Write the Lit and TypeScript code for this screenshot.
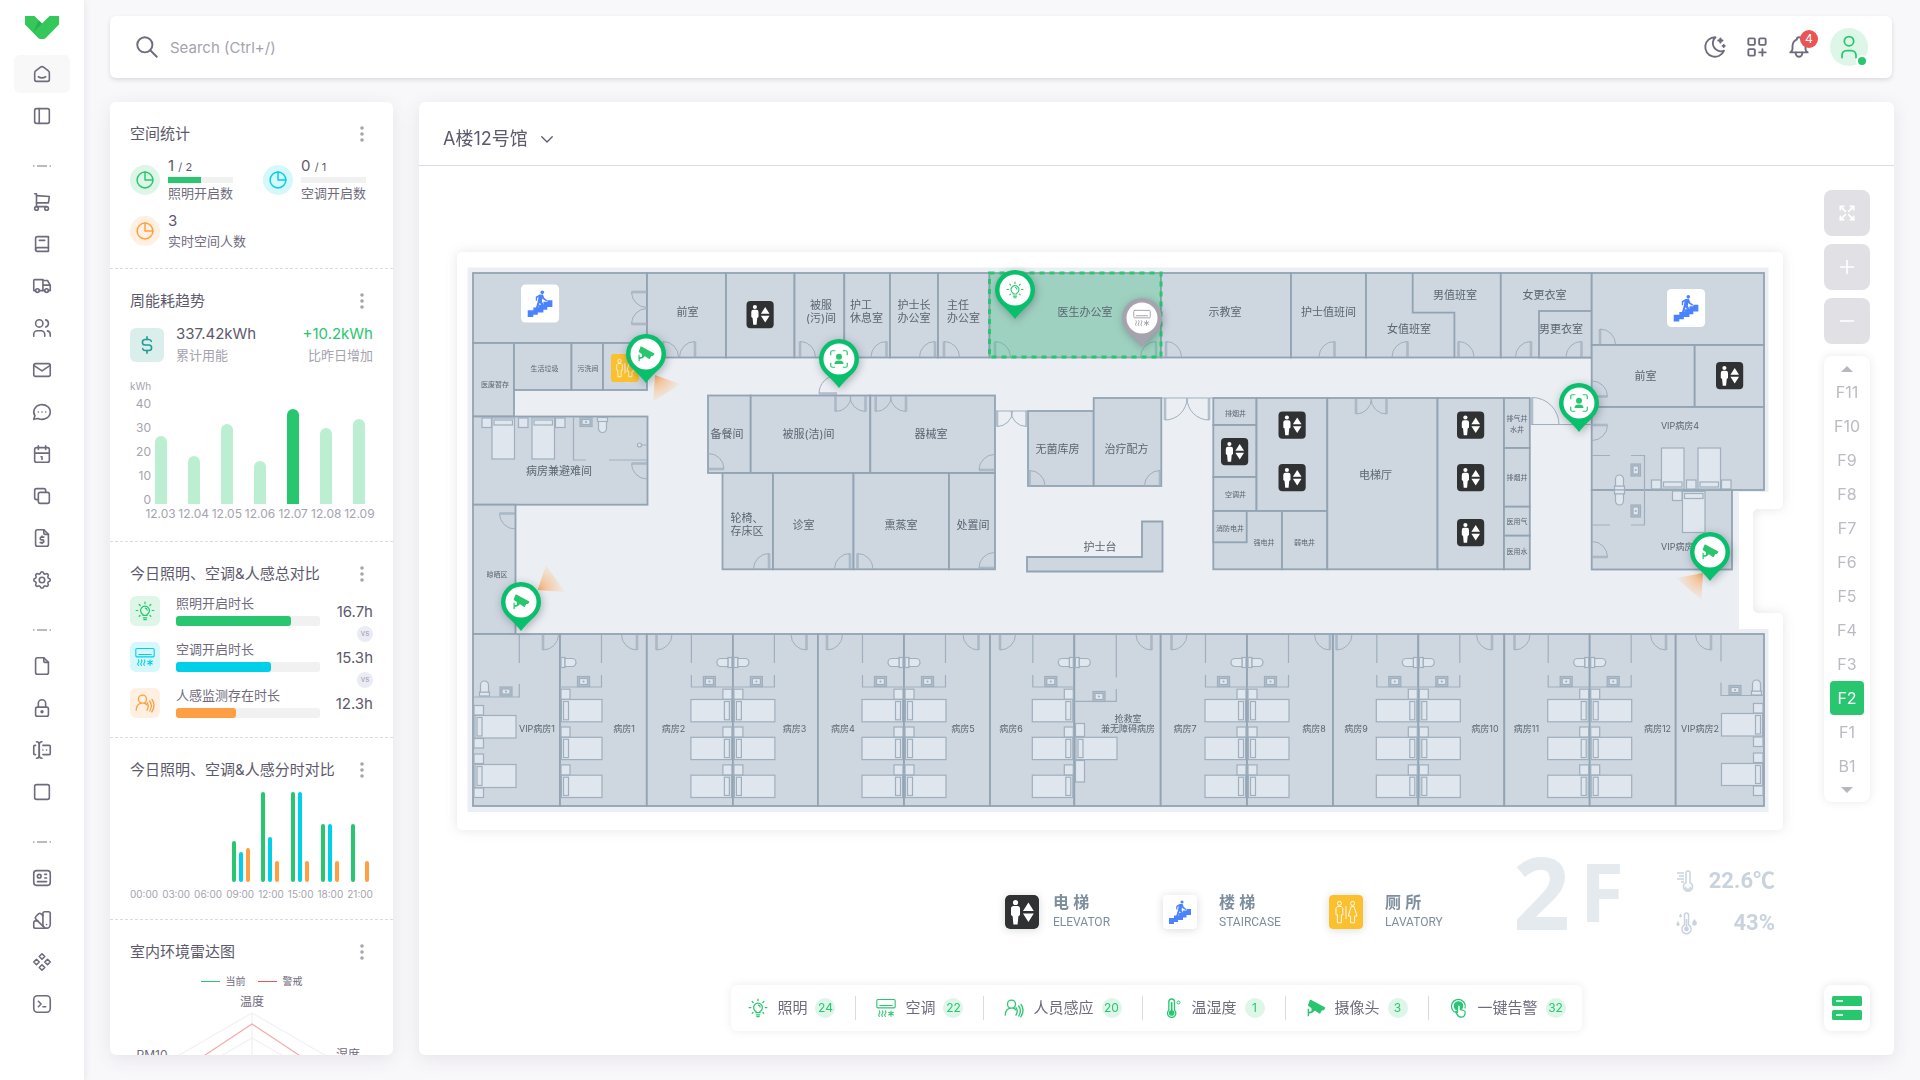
import { LitElement, html, css, svg, nothing } from "lit";
import { customElement, state } from "lit/decorators.js";
import { classMap } from "lit/directives/class-map.js";
import { styleMap } from "lit/directives/style-map.js";

const base = css`
  * { box-sizing: border-box; }
  :host {
    --text: #5d596c;
    --body: #6f6b7d;
    --muted: #a5a3ae;
    --green: #28c76f;
    --cyan: #00cfe8;
    --orange: #ff9f43;
    --track: #f1f1f2;
    font-family: Inter, "Noto Sans CJK SC", sans-serif;
    color: var(--text);
  }
  button, input, select {
    font: inherit;
    color: inherit;
    border: 0;
    padding: 0;
    margin: 0;
    background: none;
  }
  button { cursor: pointer; }
  svg { display: block; flex: none; }
`;

/* ---------- line icons, 24 unit grid ---------- */
const LINE: Record<string, string[]> = {
  home: ["M19 8.71l-5.333-4.148a2.666 2.666 0 0 0-3.274 0L5.059 8.71a2.665 2.665 0 0 0-1.029 2.105v7.2a2 2 0 0 0 2 2h12a2 2 0 0 0 2-2v-7.2c0-.823-.38-1.6-1.03-2.105", "M16 15c-2.21 1.333-5.792 1.333-8 0"],
  sidebar: ["M4 6a2 2 0 0 1 2-2h12a2 2 0 0 1 2 2v12a2 2 0 0 1-2 2H6a2 2 0 0 1-2-2z", "M9 4v16"],
  cart: ["M4 19a2 2 0 1 0 4 0a2 2 0 1 0-4 0", "M15 19a2 2 0 1 0 4 0a2 2 0 1 0-4 0", "M17 17H6V3H4", "M6 5l14 1l-1 7H6"],
  book: ["M19 4v16H7a2 2 0 0 1-2-2V6a2 2 0 0 1 2-2h12z", "M19 16H7a2 2 0 0 0-2 2", "M9 8h6"],
  truck: ["M5 17a2 2 0 1 0 4 0a2 2 0 1 0-4 0", "M15 17a2 2 0 1 0 4 0a2 2 0 1 0-4 0", "M5 17H3V6a1 1 0 0 1 1-1h9v12m-4 0h6m4 0h2v-6h-8m0-5h5l3 5"],
  users: ["M5 7a4 4 0 1 0 8 0a4 4 0 1 0-8 0", "M3 21v-2a4 4 0 0 1 4-4h4a4 4 0 0 1 4 4v2", "M16 3.13a4 4 0 0 1 0 7.75", "M21 21v-2a4 4 0 0 0-3-3.85"],
  mail: ["M3 7a2 2 0 0 1 2-2h14a2 2 0 0 1 2 2v10a2 2 0 0 1-2 2H5a2 2 0 0 1-2-2z", "M3 7l9 6l9-6"],
  message: ["M3 20l1.3-3.9a9 8 0 1 1 3.4 2.9L3 20", "M12 12v.01", "M8 12v.01", "M16 12v.01"],
  calendar: ["M4 7a2 2 0 0 1 2-2h12a2 2 0 0 1 2 2v12a2 2 0 0 1-2 2H6a2 2 0 0 1-2-2z", "M16 3v4", "M8 3v4", "M4 11h16", "M11 15h1v3"],
  copy: ["M8 10a2 2 0 0 1 2-2h8a2 2 0 0 1 2 2v8a2 2 0 0 1-2 2h-8a2 2 0 0 1-2-2z", "M16 8V6a2 2 0 0 0-2-2H6a2 2 0 0 0-2 2v8a2 2 0 0 0 2 2h2"],
  invoice: ["M14 3v4a1 1 0 0 0 1 1h4", "M17 21H7a2 2 0 0 1-2-2V5a2 2 0 0 1 2-2h7l5 5v11a2 2 0 0 1-2 2z", "M14 11h-2.5a1.5 1.5 0 0 0 0 3h1a1.5 1.5 0 0 1 0 3H10", "M12 17v1m0-8v1"],
  settings: ["M10.325 4.317c.426-1.756 2.924-1.756 3.35 0a1.724 1.724 0 0 0 2.573 1.066c1.543-.94 3.31.826 2.37 2.37a1.724 1.724 0 0 0 1.065 2.572c1.756.426 1.756 2.924 0 3.35a1.724 1.724 0 0 0-1.066 2.573c.94 1.543-.826 3.31-2.37 2.37a1.724 1.724 0 0 0-2.572 1.065c-.426 1.756-2.924 1.756-3.35 0a1.724 1.724 0 0 0-2.573-1.066c-1.543.94-3.31-.826-2.37-2.37a1.724 1.724 0 0 0-1.065-2.572c-1.756-.426-1.756-2.924 0-3.35a1.724 1.724 0 0 0 1.066-2.573c-.94-1.543.826-3.31 2.37-2.37c1 .608 2.296.07 2.572-1.065z", "M9 12a3 3 0 1 0 6 0a3 3 0 0 0-6 0"],
  file: ["M14 3v4a1 1 0 0 0 1 1h4", "M17 21H7a2 2 0 0 1-2-2V5a2 2 0 0 1 2-2h7l5 5v11a2 2 0 0 1-2 2z"],
  lock: ["M5 13a2 2 0 0 1 2-2h10a2 2 0 0 1 2 2v6a2 2 0 0 1-2 2H7a2 2 0 0 1-2-2z", "M11 16a1 1 0 1 0 2 0a1 1 0 0 0-2 0", "M8 11V7a4 4 0 1 1 8 0v4"],
  forms: ["M12 3a3 3 0 0 0-3 3v12a3 3 0 0 0 3 3", "M6 3a3 3 0 0 1 3 3v12a3 3 0 0 1-3 3", "M13 7h7a1 1 0 0 1 1 1v8a1 1 0 0 1-1 1h-7", "M5 7H4a1 1 0 0 0-1 1v8a1 1 0 0 0 1 1h1", "M17 12h.01", "M13 12h.01"],
  square: ["M4 6a2 2 0 0 1 2-2h12a2 2 0 0 1 2 2v12a2 2 0 0 1-2 2H6a2 2 0 0 1-2-2z"],
  id: ["M3 7a3 3 0 0 1 3-3h12a3 3 0 0 1 3 3v10a3 3 0 0 1-3 3H6a3 3 0 0 1-3-3z", "M7 10a2 2 0 1 0 4 0a2 2 0 1 0-4 0", "M15 8h2", "M15 12h2", "M7 16h10"],
  swatch: ["M19 3h-4a2 2 0 0 0-2 2v12a4 4 0 0 0 8 0V5a2 2 0 0 0-2-2", "M13 7.35l-2-2a2 2 0 0 0-2.828 0L5.344 8.178a2 2 0 0 0 0 2.828l9 9", "M7.3 13H5a2 2 0 0 0-2 2v4a2 2 0 0 0 2 2h12", "M17 17v.01"],
  components: ["M3 12l3 3l3-3l-3-3z", "M15 12l3 3l3-3l-3-3z", "M9 6l3 3l3-3l-3-3z", "M9 18l3 3l3-3l-3-3z"],
  terminal: ["M8 9l3 3l-3 3", "M13 15h3", "M3 7a4 4 0 0 1 4-4h10a4 4 0 0 1 4 4v10a4 4 0 0 1-4 4H7a4 4 0 0 1-4-4z"],
  search: ["M3 10a7 7 0 1 0 14 0a7 7 0 1 0-14 0", "M21 21l-6-6"],
  moon: ["M12 3h.393a7.5 7.5 0 0 0 7.92 12.446A9 9 0 1 1 12 2.992z", "M17 4a2 2 0 0 0 2 2a2 2 0 0 0-2 2a2 2 0 0 0-2-2a2 2 0 0 0 2-2", "M19 11h2m-1-1v2"],
  grid: ["M4 5a1 1 0 0 1 1-1h4a1 1 0 0 1 1 1v4a1 1 0 0 1-1 1H5a1 1 0 0 1-1-1z", "M14 5a1 1 0 0 1 1-1h4a1 1 0 0 1 1 1v4a1 1 0 0 1-1 1h-4a1 1 0 0 1-1-1z", "M4 15a1 1 0 0 1 1-1h4a1 1 0 0 1 1 1v4a1 1 0 0 1-1 1H5a1 1 0 0 1-1-1z", "M14 17h6m-3-3v6"],
  bell: ["M10 5a2 2 0 1 1 4 0a7 7 0 0 1 4 6v3a4 4 0 0 0 2 3H4a4 4 0 0 0 2-3v-3a7 7 0 0 1 4-6", "M9 17v1a3 3 0 0 0 6 0v-1"],
  user: ["M8 7a4 4 0 1 0 8 0a4 4 0 0 0-8 0", "M6 21v-2a4 4 0 0 1 4-4h4a4 4 0 0 1 4 4v2"],
  chevron: ["M5 9l7 7l7-7"],
  expand: ["M16 4h4v4", "M14 10l6-6", "M8 20H4v-4", "M4 20l6-6", "M16 20h4v-4", "M14 14l6 6", "M8 4H4v4", "M4 4l6 6"],
  plus: ["M12 5v14", "M5 12h14"],
  minus: ["M5 12h14"],
  pie: ["M12 2.500a9.500 9.500 0 1 0 9.500 9.500a9.500 9.500 0 0 0-9.500-9.500", "M12 2.500v9.500h9.500"],
  dollar: ["M16.7 8a3 3 0 0 0-2.7-2h-4a3 3 0 0 0 0 6h4a3 3 0 0 1 0 6h-4a3 3 0 0 1-2.7-2", "M12 3v3m0 12v3"],
};

const line = (name: string, size = 22, width = 2) => html`
  <svg width=${size} height=${size} viewBox="0 0 24 24" fill="none" stroke="currentColor" stroke-width=${width} stroke-linecap="round" stroke-linejoin="round" aria-hidden="true">
    ${LINE[name].map((d) => svg`<path d=${d}></path>`)}
  </svg>`;

/* ---------- device glyphs, 24 unit grid, drawn in currentColor ---------- */
const device = (name: string) => {
  switch (name) {
    case "bulb":
      return svg`<g fill="none" stroke="currentColor" stroke-width="1.5" stroke-linecap="round">
        <path d="M9.6 17.4v-1.2a5.3 5.3 0 1 1 4.8 0v1.2z"></path><path d="M10 20.2h4M10.6 22.4h2.8"></path>
        <path d="M12 1.4v1.8M5 4.2l1.2 1.2M19 4.2l-1.2 1.2M1.4 11.4h2M20.6 11.4h2M5 18.4l1-1M19 18.4l-1-1"></path>
        <path d="M12.4 8.6a2.6 2.6 0 0 1 2.2 2.2"></path></g>`;
    case "ac":
      return svg`<g fill="none" stroke="currentColor" stroke-width="1.3" stroke-linecap="round">
        <rect x="1" y="1.8" width="22" height="10" rx="1.2"></rect><path d="M4.6 9h14.8"></path>
        <path d="M4 15.4q1.6 1.8 0 3.4t0 3.4M7.6 15.4q1.6 1.8 0 3.4t0 3.4M11.2 15.4q1.6 1.8 0 3.4t0 3.4"></path>
        <path d="M18 15.6v6.4M15.2 17.2l5.6 3.2M20.8 17.2l-5.6 3.2"></path></g>`;
    case "sense":
      return svg`<g fill="none" stroke="currentColor" stroke-width="1.6" stroke-linecap="round">
        <circle cx="9" cy="7.4" r="4.8"></circle><path d="M1.4 20.4c.2-4.6 2.8-7.4 6-8.2M11 12c1.4.4 2.4 1.2 3 2.2"></path>
        <path d="M14.4 11.6q3 3.6 0 9M17.6 9.6q4 5.4.2 12M20.4 7.6q5 7-.2 15"></path></g>`;
    case "thermo":
      return svg`<g fill="none" stroke="currentColor" stroke-width="1.6">
        <path d="M7 14.6V4.6a3.4 3.4 0 0 1 6.8 0v10a5 5 0 1 1-6.8 0z"></path><circle cx="10.4" cy="18" r="2.6" fill="currentColor"></circle>
        <path d="M10.4 5v12" stroke-width="2"></path><circle cx="18.6" cy="5.4" r="1.8" stroke-width="1.2"></circle></g>`;
    case "camera":
      return svg`<g fill="currentColor"><path d="M4.600 2.400a1 1 0 0 1 1.200-.3L22.600 11a1 1 0 0 1 .3 1.500l-1.700 2.200-2.400.2-1.600 3.300a1 1 0 0 1-1.400.3L2.800 9.600a1 1 0 0 1-.4-1.200z"></path>
        <path d="M2 13h1.600v3.400l3-.6V11.400l4.600 3-3.600 3.400-4 1v3H2z"></path></g>`;
    case "hand":
      return svg`<g fill="none" stroke="currentColor" stroke-width="1.500" stroke-linecap="round" stroke-linejoin="round">
        <path d="M6.400 16.800A8.300 8.300 0 1 1 19.300 12"></path><circle cx="11.400" cy="9.600" r="5" fill="currentColor"></circle>
        <path d="M10.200 17.400V10a1.700 1.700 0 0 1 3.400 0v4l4.200 1a2.200 2.200 0 0 1 1.600 2.400c-.2 3.400-1.400 5.600-4.400 5.600s-4.400-1.600-5.400-3.400l-1.800-3q1.200-1 2.400.8z" fill="#fff"></path></g>`;
    case "face":
      return svg`<g fill="none" stroke="currentColor" stroke-width="1.600"><path d="M1 7V3a2 2 0 0 1 2-2h4M17 1h4a2 2 0 0 1 2 2v4M23 17v4a2 2 0 0 1-2 2h-4M7 23H3a2 2 0 0 1-2-2v-4"></path>
        <circle cx="12" cy="9" r="4" fill="currentColor" stroke="none"></circle><path d="M6 18.500c0-3.200 2.400-4.500 6-4.500s6 1.300 6 4.500z" fill="currentColor" stroke="none"></path></g>`;
  }
  return nothing;
};
const deviceIcon = (name: string, size = 20) =>
  html`<svg width=${size} height=${size} viewBox="0 0 24 24" aria-hidden="true">${device(name)}</svg>`;

/* ---------- facility signs, 34 unit tiles ---------- */
const elevatorSign = svg`<rect width="34" height="34" rx="5" fill="#303133"></rect>
  <g fill="#fff"><circle cx="10.500" cy="7.500" r="2.600"></circle>
  <path d="M8.600 11h3.800a2.600 2.600 0 0 1 2.600 2.600v6.400l-1.600 1.200-.8 8.400h-4.200l-.8-8.400L6 20v-6.400A2.600 2.600 0 0 1 8.600 11z"></path>
  <path d="M23.400 7.400l5.400 8.600H18zM23.400 27l5.400-8.600H18z"></path></g>`;
const stairSign = svg`<rect width="34" height="34" rx="4" fill="#fff"></rect>
  <g fill="#4a83ff"><path d="M6 23h5v-2.500h4.500V18H20v-2.500h3.500V14H28v6h-4.500v2.500H20V25h-5v2h-4v2H6z"></path>
  <circle cx="19" cy="7" r="1.600"></circle>
  <path d="M16.600 9h3l1.200 3 2.600 2-.8 1-3-1.800-.6-1-.4 3 1.800 3-1 3.500-1.400-.5.400-2.500-1.800-2.500-2.200 6.500-1.600-.4 2.400-8 .4-3.300-1.200 1v2.500h-1.200V11z"></path></g>`;
const toiletSign = svg`<rect width="34" height="34" rx="3" fill="#fbc02d"></rect>
  <g fill="none" stroke="#fff" stroke-width=".9" stroke-linejoin="round"><circle cx="10.400" cy="8.400" r="2"></circle><circle cx="23.600" cy="8.400" r="2"></circle>
  <path d="M8.400 11.500h4l1.400 1.800v6.500h-1.400v8H8.400v-8H7v-6.500zM22.200 11.500h2.800l3 9.500h-2.400v6.800h-4V21h-2.400zM17 11v13"></path></g>`;
const sign = (art: unknown) => html`<svg class="sign" width="34" height="34" viewBox="0 0 34 34" aria-hidden="true">${art}</svg>`;

/* ---------- navigation rail ---------- */
@customElement("side-nav")
class SideNav extends LitElement {
  @state() private current = "home";
  static styles = [base, css`
    :host { display: block; background: #fff; box-shadow: 0 2px 8px rgba(75, 70, 92, 0.12); }
    nav { display: flex; flex-direction: column; align-items: center; gap: 4px; padding-top: 16px; }
    .logo { margin-bottom: 12px; }
    .item { display: grid; place-items: center; width: 56px; height: 38px; border-radius: 6px; color: var(--body); }
    .item.active { background: #f8f8f8; }
  `];
  private groups = [
    ["home", "sidebar"],
    ["cart", "book", "truck", "users", "mail", "message", "calendar", "copy", "invoice", "settings"],
    ["file", "lock", "forms", "square"],
    ["id", "swatch", "components", "terminal"],
  ];
  render() {
    return html`<nav aria-label="main">
      <svg class="logo" width="34" height="23" viewBox="0 0 34 23" aria-hidden="true">
        <path d="M0 0h9.500L17 7.500 24.500 0H34v8.500L20.500 22.200q-.8.800-2 .8h-3q-1.200 0-2-.8L0 8.500z" fill="#34c759"></path>
        <path d="M14 4.500 8 16.500 17 7.500z" fill="#259a45" opacity=".55"></path>
      </svg>
      ${this.groups.map((g, i) => html`
        ${i ? html`<svg width="18" height="40" viewBox="0 0 18 40" aria-hidden="true"><path d="M0 27h1.500M4 27h10M16.500 27H18" stroke="#a5a3ae" stroke-width="1.400"></path></svg>` : nothing}
        ${g.map((n) => html`<a href="#${n}" aria-label=${n} class=${classMap({ item: true, active: n === this.current })}
          @click=${() => (this.current = n)}>${line(n, 22, 1.75)}</a>`)}`)}
    </nav>`;
  }
}

/* ---------- statistics column ---------- */
@customElement("stat-panel")
class StatPanel extends LitElement {
  static styles = [base, css`
    :host {
      display: block; background: #fff; border-radius: 6px; overflow: auto; scrollbar-width: none;
      box-shadow: 0 4px 18px rgba(75, 70, 92, 0.1);
    }
    section { padding: 21px 20px 17px; border-bottom: 1px dashed #dbdade; }
    section:last-child { border: 0; }
    header { display: flex; justify-content: space-between; align-items: center; height: 22px; }
    h2 { margin: 0; font-size: 15px; font-weight: 400; line-height: 22px; white-space: nowrap; }
    .more { width: 22px; height: 22px; display: grid; place-items: center; color: var(--muted); }
    .counts { display: grid; grid-template-columns: 1fr 110px; row-gap: 8px; margin-top: 11px; }
    .count { display: flex; align-items: center; gap: 8px; line-height: 20px; }
    .disc { display: grid; place-items: center; width: 30px; height: 30px; border-radius: 50%; }
    .tile { display: grid; place-items: center; width: 30px; height: 30px; border-radius: 6px; }
    .green { color: var(--green); background: #ddf6e8; }
    .cyan { color: var(--cyan); background: #d6f7fb; }
    .orange { color: var(--orange); background: #fff0e1; }
    .num { font-size: 15px; height: 20px; }
    .num small { font-size: 11px; }
    .name { font-size: 13px; color: var(--body); white-space: nowrap; }
    .mini { width: 65px; height: 6px; background: var(--track); margin-top: 1px; }
    .fill { height: 100%; border-radius: inherit; }
    .summary { display: flex; align-items: center; margin-top: 11px; line-height: 21px; }
    .money { display: grid; place-items: center; width: 34px; height: 34px; border-radius: 6px; margin-right: 12px; color: #1f9d95; background: #daeeec; }
    .summary strong { display: block; font-size: 15px; font-weight: 400; }
    .summary small { font-size: 13px; color: var(--muted); }
    .delta { margin-left: auto; text-align: right; }
    .delta strong { color: var(--green); }
    .week { display: grid; grid-template-columns: 21px 1fr; margin-top: 14px; font-size: 12px; color: var(--muted); }
    .unit { grid-column: 1 / -1; font-size: 10px; line-height: 12px; }
    .axis { display: flex; flex-direction: column; text-align: right; line-height: 24px; }
    .days { display: flex; margin: 12px -3px 0 -7px; }
    .day { flex: 1; display: flex; flex-direction: column; align-items: center; line-height: 20px; }
    .plot { height: 100px; display: flex; align-items: flex-end; }
    .bar { width: 12px; border-radius: 6px 6px 0 0; background: #bceed2; }
    .bar.peak { background: var(--green); }
    .compare { display: flex; flex-direction: column; margin-top: 11px; padding-bottom: 2px; }
    .row { display: flex; align-items: center; height: 30px; }
    .mid { flex: 1; margin-left: 16px; }
    .mid .name { display: block; line-height: 14px; margin-bottom: 6px; }
    .wide { height: 10px; border-radius: 3px; background: var(--track); }
    .hours { width: 53px; text-align: right; font-size: 15px; }
    .vs { align-self: flex-end; width: 16px; height: 16px; border-radius: 50%; background: #ebebf5; color: var(--muted); font-size: 8px; line-height: 15px; text-align: center; }
    .hourly { display: flex; justify-content: flex-end; padding-right: 4px; height: 90px; margin-top: 11px; }
    .slot { width: 30px; display: flex; align-items: flex-end; justify-content: flex-end; gap: 3px; }
    .stick { width: 4px; border-radius: 2px; }
    .times { display: flex; justify-content: space-between; margin-top: 4px; font-size: 10px; line-height: 16px; color: var(--muted); }
    .key { display: flex; justify-content: center; align-items: center; gap: 12px; margin-top: 10px; font-size: 10px; line-height: 16px; color: var(--body); }
    .key span { display: flex; align-items: center; gap: 6px; }
    .key i { width: 19px; height: 1px; }
    .bg-green { background: var(--green); }
    .bg-cyan { background: var(--cyan); }
    .bg-orange { background: var(--orange); }
    .bg-red { background: #ea5455; }
    .radar { width: 100%; }
    .radar text { font-size: 12px; fill: var(--body); text-anchor: middle; }
  `];
  private week: [string, number][] = [["12.03", 27.4], ["12.04", 19.4], ["12.05", 32.2], ["12.06", 17.4], ["12.07", 38], ["12.08", 30.6], ["12.09", 34.2]];
  private hourly: [string, number, number, number][] = [
    ["00:00", 0, 0, 0], ["03:00", 0, 0, 0], ["06:00", 0, 0, 0], ["09:00", 41, 30, 34], ["12:00", 90, 45, 21],
    ["15:00", 90, 90, 21], ["18:00", 58, 58, 21], ["21:00", 58, 0, 21],
  ];
  private head(title: string) {
    return html`<header><h2>${title}</h2><button class="more" aria-label="more">
      <svg width="4" height="16" viewBox="0 0 4 16" fill="currentColor"><circle cx="2" cy="2" r="1.800"></circle><circle cx="2" cy="8" r="1.800"></circle><circle cx="2" cy="14" r="1.800"></circle></svg>
    </button></header>`;
  }
  private count(tone: string, n: string, total: string, name: string, pct = -1) {
    return html`<div class="count"><span class="disc ${tone}">${line("pie", 20, 1.75)}</span>
      <div><div class="num">${n} ${total ? html`<small>/ ${total}</small>` : nothing}</div>
      ${pct >= 0 ? html`<div class="mini"><div class="fill bg-${tone}" style=${styleMap({ width: pct + "%" })}></div></div>` : nothing}
      <div class="name">${name}</div></div></div>`;
  }
  private row(tone: string, icon: string, name: string, pct: number, hours: string) {
    return html`<div class="row"><span class="tile ${tone}">${deviceIcon(icon, 20)}</span>
      <div class="mid"><span class="name">${name}</span><div class="wide"><div class="fill bg-${tone}" style=${styleMap({ width: pct + "%" })}></div></div></div>
      <span class="hours">${hours}</span></div>`;
  }
  private hexagon(r: number) {
    return [0, 1, 2, 3, 4, 5].map((i) => {
      const a = (Math.PI / 3) * i - Math.PI / 2;
      return `${(122 + r * Math.cos(a)).toFixed(1)},${(109 + r * Math.sin(a)).toFixed(1)}`;
    }).join(" ");
  }
  render() {
    return html`
      <section>${this.head("空间统计")}
        <div class="counts">
          ${this.count("green", "1", "2", "照明开启数", 50)}
          ${this.count("cyan", "0", "1", "空调开启数", 0)}
          ${this.count("orange", "3", "", "实时空间人数")}
        </div>
      </section>
      <section>${this.head("周能耗趋势")}
        <div class="summary"><span class="money">${line("dollar", 22, 1.75)}</span>
          <div><strong>337.42kWh</strong><small>累计用能</small></div>
          <div class="delta"><strong>+10.2kWh</strong><small>比昨日增加</small></div></div>
        <div class="week"><span class="unit">kWh</span>
          <div class="axis">${[40, 30, 20, 10, 0].map((v) => html`<span>${v}</span>`)}</div>
          <div class="days">${this.week.map(([d, v]) => html`<div class="day"><div class="plot">
            <div class=${classMap({ bar: true, peak: v === 38 })} style=${styleMap({ height: v * 2.5 + "px" })}></div></div>${d}</div>`)}</div>
        </div>
      </section>
      <section>${this.head("今日照明、空调&人感总对比")}
        <div class="compare">
          ${this.row("green", "bulb", "照明开启时长", 80, "16.7h")}<span class="vs">vs</span>
          ${this.row("cyan", "ac", "空调开启时长", 66, "15.3h")}<span class="vs">vs</span>
          ${this.row("orange", "sense", "人感监测存在时长", 42, "12.3h")}
        </div>
      </section>
      <section>${this.head("今日照明、空调&人感分时对比")}
        <div class="hourly">${this.hourly.map(([, ...v]) => html`<div class="slot">
          ${v.map((h, i) => html`<div class="stick bg-${["green", "cyan", "orange"][i]}" style=${styleMap({ height: h + "px" })}></div>`)}</div>`)}</div>
        <div class="times">${this.hourly.map(([t]) => html`<span>${t}</span>`)}</div>
      </section>
      <section>${this.head("室内环境雷达图")}
        <div class="key"><span><i class="bg-green"></i>当前</span><span><i class="bg-red"></i>警戒</span></div>
        <svg class="radar" viewBox="0 0 243 210">
          <g fill="none" stroke="#f1f1f3" stroke-width="1.200">
            ${[85, 60, 35].map((r) => svg`<polygon points=${this.hexagon(r)}></polygon>`)}
            <path d="M122 24v170M48.400 66.500l147.200 85M195.600 66.500l-147.200 85"></path></g>
          <polygon points="122,35 184,76 178,142 122,172 62,144 60,76" fill="none" stroke="#f5a9aa" stroke-width="1.200"></polygon>
          <text x="122" y="17">温度</text><text x="22" y="70">PM10</text><text x="218" y="70">湿度</text>
        </svg>
      </section>`;
  }
}

/* ---------- floor plan ---------- */
const WALL = "#92a3b3";
type Door = [number, number, number, number, number, number];

const room = (x1: number, y1: number, x2: number, y2: number) =>
  svg`<rect x=${x1} y=${y1} width=${x2 - x1} height=${y2 - y1}></rect>`;

/* hinge, vector of the leaf, vector of the closed position */
const door = ([x, y, ax, ay, bx, by]: Door) => {
  const r = Math.hypot(ax, ay);
  const sweep = ax * by - ay * bx > 0 ? 1 : 0;
  return svg`<path d="M${x + bx} ${y + by}A${r} ${r} 0 0 ${1 - sweep} ${x + ax} ${y + ay}" stroke-width="1"></path>
    <path d="M${x} ${y}l${ax} ${ay}" stroke-width="2.600" opacity=".75"></path>`;
};

const bed = (x: number, y: number, w: number, h: number, side: string) => {
  const p = side === "l" ? [x + 2, y + 2, 5, h - 4] : side === "r" ? [x + w - 7, y + 2, 5, h - 4]
    : side === "t" ? [x + 2, y + 2, w - 4, 5] : [x + 2, y + h - 7, w - 4, 5];
  return svg`<rect x=${x} y=${y} width=${w} height=${h}></rect><rect x=${p[0]} y=${p[1]} width=${p[2]} height=${p[3]}></rect>`;
};
const box = (x: number, y: number, w = 9, h = 10) => svg`<rect x=${x} y=${y} width=${w} height=${h}></rect>`;
const sink = (x: number, y: number, w = 12, h = 10) => svg`
  <rect x=${x} y=${y} width=${w} height=${h} fill="#b3c0cc"></rect>
  <rect x=${x + 2} y=${y + 2} width=${w - 4} height=${h - 4}></rect><circle cx=${x + w / 2} cy=${y + h / 2} r=".5"></circle>`;
const toilet = (x: number, y: number, turn: number) => svg`<g transform="translate(${x} ${y}) rotate(${turn})">
  <rect x="0" y="-5" width="4" height="10"></rect><path d="M4-4h7a4 4 0 0 1 0 8H4z"></path></g>`;

const wing = (x: number, dir: number, full = true) => svg`<g transform="translate(${x} 0) scale(${dir} 1)">
  ${toilet(1, 662.5, 0)}
  ${full ? svg`<path d="M41.500 635v28M41.500 675v12H0" fill="none"></path>${sink(17.5, 676.5)}
    ${[699.5, 737.3, 775.2].map((y) => svg`${bed(1.5, y, 40.5, 22.3, "l")}${box(1, y - 10.3)}`)}` : nothing}</g>`;

const ROOMS: [number, number, number, number][] = [
  [473, 273, 647, 343], [473, 343, 514, 416.5], [514, 343, 571.5, 390], [571.5, 343, 603, 390], [603, 343, 647, 390],
  [647, 273, 726, 357.5], [726, 273, 794.5, 357.5], [794.5, 273, 844.3, 357.5], [844.3, 273, 890, 357.5], [890, 273, 938, 357.5],
  [938, 273, 989.5, 357.5], [989.5, 273, 1161, 357.5], [1161, 273, 1291, 357.5], [1291, 273, 1366, 357.5], [1366, 273, 1500.8, 357.5],
  [1500.8, 273, 1591.7, 357.5], [1539, 311, 1591.7, 357.5], [1591.7, 273, 1764, 345], [1591.7, 345, 1694.7, 407], [1694.7, 345, 1764, 407],
  [1591.7, 407, 1764, 490], [1591.7, 490, 1732, 569.5], [473, 416.5, 647.5, 504.7], [473, 504.7, 515.5, 634],
  [708, 395.5, 750.7, 473], [750.7, 395.5, 870.3, 473], [870.3, 395.5, 995, 473],
  [722.5, 473, 773, 569.3], [773, 473, 853.5, 569.3], [853.5, 473, 949, 569.3], [949, 473, 995, 569.3],
  [1028, 411, 1093.7, 486], [1093.7, 398, 1161.3, 486],
  [1213.3, 398, 1256.5, 425], [1213.3, 425, 1256.5, 477], [1213.3, 477, 1256.5, 511], [1256.5, 398, 1327.3, 511],
  [1213.3, 511, 1282, 569.3], [1213.3, 511, 1246.7, 542.3], [1282, 511, 1327.3, 569.3], [1327.3, 398, 1437.5, 569.3],
  [1437.5, 398, 1504, 569.3], [1504, 398, 1529.8, 448], [1504, 448, 1529.8, 506.7], [1504, 506.7, 1529.8, 535.7], [1504, 535.7, 1529.8, 569.3],
];
const LOWER = [473, 560, 646.8, 732.9, 817.9, 904, 990, 1074.3, 1160.7, 1247, 1333, 1418.3, 1504.3, 1589.7, 1675.7, 1764];

const up = (x: number, y: number, dir: number): Door => [x, y, 0, -15.5, 15.5 * dir, 0];
const down = (x: number, y: number, dir: number, r = 15.5): Door => [x, y, 0, r, r * dir, 0];
const DOORS: Door[] = [
  up(663, 357, 1), up(695, 357, -1), up(800, 357, 1), up(886.5, 357, -1), up(935, 357, -1), up(944, 357, 1), up(995, 357, 1),
  up(1156, 357, -1), up(1166, 357, 1), up(1334.5, 357, -1), up(1407.5, 357, -1), up(1458.5, 357, 1), up(1531, 357, -1), up(1581.5, 357, -1),
  up(1600, 344.5, 1), up(769, 569, -1), up(850, 569, -1), up(857.5, 569, 1), up(1160, 486, -1), up(1029.5, 486, 1),
  [647, 292, -15.5, 0, 0, 15.5], [647, 324, -15.5, 0, 0, -15.5], [515, 513.5, -15.5, 0, 0, 15.5], [647, 463.5, -15.5, 0, 0, 15.5],
  [1592, 396.5, 15.5, 0, 0, -15.5], [1592, 425, 15.5, 0, 0, 15.5], [1592, 557, 15.5, 0, 0, -15.5],
  [708.5, 469, 15.5, 0, 0, -15.5], [994.5, 470, -15.5, 0, 0, -15.5], [994.5, 568, -15.5, 0, 0, -15.5], [837, 393.5, -18, 0, 0, -18],
  down(835.5, 396, 1), down(865.5, 396, -1), down(875.7, 396, 1), down(906, 396, -1), down(997, 411, 1), down(1026.5, 411, -1),
  down(1165, 398, 1, 22), down(1209, 398, -1, 22), down(1356, 398.5, 1), down(1386.5, 398.5, -1), [1532, 424.5, 0, -27, 27, 0],
  ...([[543, 1], [637, -1], [656.5, 1], [806.5, -1], [827, 1], [978.5, -1], [1000, 1], [1151.5, -1], [1171.5, 1], [1330, -1],
    [1336.5, 1], [1492, -1], [1514.5, 1], [1666, -1], [1711, -1]] as [number, number][]).map(([x, d]) => down(x, 634.5, d)),
];

/* text, centre, baseline, size */
const LABELS: [string, number, number, number][] = [
  ["前室", 687.5, 316, 11], ["被服", 821, 309, 11], ["(污)间", 821, 322, 11], ["护工", 861, 309, 11], ["休息室", 866.5, 322, 11],
  ["护士长", 914, 309, 11], ["办公室", 914, 322, 11], ["主任", 958, 309, 11], ["办公室", 963.5, 322, 11], ["医生办公室", 1085, 316, 11],
  ["示教室", 1225, 316, 11], ["护士值班间", 1328.5, 316, 11], ["男值班室", 1455, 299, 11], ["女值班室", 1409, 333, 11],
  ["女更衣室", 1544.5, 299, 11], ["男更衣室", 1561, 333, 11], ["前室", 1645.5, 380, 11], ["备餐间", 727, 437.5, 11],
  ["被服(洁)间", 808.5, 437.5, 11], ["器械室", 931, 437.5, 11], ["轮椅、", 747, 522, 11], ["存床区", 747, 535, 11],
  ["诊室", 803.5, 529, 11], ["熏蒸室", 901, 529, 11], ["处置间", 973, 529, 11], ["无菌库房", 1057.5, 452.5, 11], ["治疗配方", 1126.5, 452.5, 11],
  ["护士台", 1100, 550.5, 11], ["电梯厅", 1375.5, 478.5, 11], ["病房兼避难间", 559, 475, 11],
  ["生活垃圾", 544.5, 370.5, 7], ["污洗间", 588, 370.5, 7], ["医废暂存", 495, 387, 7], ["晾晒区", 497, 577, 7],
  ["排烟井", 1235.5, 415.5, 7], ["空调井", 1235.5, 497, 7], ["消防电井", 1230, 530.5, 7], ["强电井", 1264, 545, 7], ["弱电井", 1304.5, 545, 7],
  ["排气井", 1517, 421, 7], ["水井", 1517, 432, 7], ["排烟井", 1517, 480, 7], ["医用气", 1517, 524, 7], ["医用水", 1517, 554, 7],
  ["VIP病房4", 1680, 429, 9], ["VIP病房3", 1680, 549.5, 9], ["VIP病房1", 537, 731.5, 9], ["病房1", 624, 731.5, 9], ["病房2", 673.5, 731.5, 9],
  ["病房3", 794.5, 731.5, 9], ["病房4", 843, 731.5, 9], ["病房5", 963, 731.5, 9], ["病房6", 1011, 731.5, 9], ["抢救室", 1128, 722, 9],
  ["兼无障碍病房", 1128, 732, 9], ["病房7", 1185, 731.5, 9], ["病房8", 1314, 731.5, 9], ["病房9", 1356, 731.5, 9],
  ["病房10", 1485, 731.5, 9], ["病房11", 1526.5, 731.5, 9], ["病房12", 1657.5, 731.5, 9], ["VIP病房2", 1700, 731.5, 9],
];
const LIFTS = [[746.5, 301], [1221, 438], [1278.5, 411.5], [1278.5, 464], [1457, 411.5], [1457, 464], [1457, 519], [1716, 362]];
const PINS: [string, number, number, string][] = [
  ["camera", 646, 354, "#08bf6b"], ["face", 839, 359, "#08bf6b"], ["camera", 521, 602, "#08bf6b"], ["bulb", 1015, 290, "#08bf6b"],
  ["ac", 1142, 318, "#a5a3ae"], ["face", 1579, 403, "#08bf6b"], ["camera", 1710, 552, "#08bf6b"],
];
const CONES: [number, number, string][] = [
  [655, 375, "655,375 680,384 653,402"], [537.5, 590, "537.5,590 546,565 565,592"], [1703, 573, "1703,573 1676,578 1701.5,600"],
];

@customElement("floor-map")
class FloorMap extends LitElement {
  static styles = [base, css`
    :host { display: block; }
    svg { width: 100%; overflow: visible; }
    text { fill: #5a6670; text-anchor: middle; }
    .card { fill: #fff; filter: drop-shadow(0 0 6px rgba(75, 70, 92, 0.14)); }
    .pin { filter: drop-shadow(1px 2px 4px rgba(60, 70, 80, 0.4)); }
    .t11 { font-size: 11px; }
    .t9 { font-size: 9px; }
    .t7 { font-size: 7px; }
  `];
  render() {
    return html`<svg viewBox="457 252 1326 578" role="img" aria-label="2F">
      <defs>${CONES.map(([x, y], i) => svg`<radialGradient id="cone${i}" gradientUnits="userSpaceOnUse" cx=${x} cy=${y} r="27">
        <stop offset="0" stop-color="#fba55c" stop-opacity=".9"></stop><stop offset="1" stop-color="#fbc08d" stop-opacity=".1"></stop></radialGradient>`)}</defs>
      <path class="card" d="M462 252H1778a5 5 0 0 1 5 5V504a5 5 0 0 1-5 5H1758a5 5 0 0 0-5 5V608a5 5 0 0 0 5 5H1778a5 5 0 0 1 5 5V825a5 5 0 0 1-5 5H462a5 5 0 0 1-5-5V257a5 5 0 0 1 5-5z"></path>
      <path d="M467.500 267.500H1768.500V492H1739V629H1768.500V812H467.500z" fill="#ebeff3"></path>
      <g fill="#ced6e0" stroke=${WALL} stroke-width="1.800">
        ${ROOMS.map((r) => room(...r))}
        <path d="M1412.700 273V312.700H1454.400V357.500" fill="none"></path>
        <path d="M1027 557H1142V521.500H1162.500V571.500H1027z"></path>
        ${LOWER.slice(1).map((x, i) => room(LOWER[i], 634, x, 806))}
      </g>
      <g fill="none" stroke="#9fafbd" stroke-width="1.200">
        <path d="M995 411h33M1161 398h52M1531 424.500h61M573.500 417v43H586M609 460h38M1592 455.500h18M1631 455.500h13.500v69.500H1631M1592 525h18"></path>
        <path d="M519.300 635v28M519.300 684v13H473M1721 635v26.500M1721 682.500v13h43M1116.300 635v42.500M1116.300 689v12.300h-42M641.500 445h6"></path>
        ${DOORS.map(door)}
      </g>
      <g fill="#dfe6ee" stroke="#9fafbd" stroke-width="1.200">
        ${wing(560, 1)}${[732.9, 904, 1247, 1418.3, 1589.7].map((x) => svg`${wing(x, -1)}${wing(x, 1)}`)}
        ${wing(1074.3, -1)}${wing(1074.3, 1, false)}
        ${sink(1093, 691.5)}${bed(1076, 737.3, 41, 22.3, "l")}${box(1075.5, 723.5, 9, 13)}${box(1075.5, 760.5, 9, 21.5)}
        ${toilet(484.5, 696, 270)}${sink(500, 687, 12, 9)}${bed(475, 715.5, 41, 22.5, "l")}${bed(475, 764.5, 41, 23, "l")}
        ${[705.5, 738.5, 754, 788].map((y) => box(474, y, 9.5, 9.5))}
        ${toilet(1756.5, 695, 270)}${sink(1729, 685.5, 12, 9)}${bed(1721.5, 713.5, 41, 22.5, "r")}${bed(1721.5, 763.5, 41, 22, "r")}
        ${[703.5, 737, 753, 786].map((y) => box(1753.5, y, 9.5, 9.5))}
        ${bed(492, 418, 22.5, 41, "t")}${bed(532, 418, 22.5, 41, "t")}${[482, 518.5, 555.5].map((x) => box(x, 418, 9.5, 9.5))}
        ${sink(580, 417.5, 12, 9)}${toilet(602.5, 417.5, 90)}<circle cx="639.500" cy="445" r="2"></circle>
        ${bed(1661.5, 448, 22.5, 41, "b")}${bed(1698, 448, 22.5, 41, "b")}${[1651.5, 1686.5, 1721.5].map((x) => box(x, 480, 9.5, 9))}
        ${bed(1682.5, 491.5, 22.5, 41, "t")}${box(1672.5, 491, 9.5, 9.5)}
        ${sink(1631, 464, 9.5, 12)}${sink(1631, 505, 9.5, 12)}${toilet(1619.5, 490, 270)}${toilet(1619.5, 490, 90)}
      </g>
      <rect x="989.500" y="273" width="171.500" height="84" fill="#28c76f" fill-opacity=".28" stroke="#28c76f" stroke-width="3" stroke-dasharray="5 5"></rect>
      ${LABELS.map(([t, x, y, s]) => svg`<text class="t${s}" x=${x} y=${y}>${t}</text>`)}
      ${LIFTS.map(([x, y]) => svg`<g transform="translate(${x} ${y}) scale(.8)">${elevatorSign}</g>`)}
      <g transform="translate(521 284.500) scale(1.120)">${stairSign}</g>
      <g transform="translate(1667 289) scale(1.120)">${stairSign}</g>
      <g transform="translate(611 354) scale(.82)">${toiletSign}</g>
      ${CONES.map(([, , p], i) => svg`<polygon points=${p} fill="url(#cone${i})"></polygon>`)}
      ${PINS.map(([n, x, y, c]) => svg`<g transform="translate(${x} ${y})">
        <path class="pin" d="M0 29Q-5 22.500-14 14.300A20 20 0 1 1 14 14.300Q5 22.500 0 29z" fill=${c}></path><circle r="15.500" fill="#fff"></circle>
        <g transform="translate(-9 -9) scale(.75)" color=${n === "ac" ? c : "#28c76f"}>${device(n)}</g></g>`)}
    </svg>`;
  }
}

/* ---------- page ---------- */
@customElement("app-root")
class AppRoot extends LitElement {
  @state() private floor = "F2";
  static styles = [base, css`
    :host { display: grid; grid-template-columns: 84px 1fr; height: 100vh; background: #f8f7fa; }
    .content { display: grid; grid-template: 62px minmax(0, 1fr) / 283px minmax(0, 1fr); gap: 24px 26px; padding: 16px 26px 25px; min-height: 0; }
    .topbar {
      grid-column: 1 / -1; display: flex; align-items: center; gap: 16px; padding: 0 24px; margin-right: 2px;
      background: #fff; border-radius: 6px; box-shadow: 0 2px 4px rgba(75, 70, 92, 0.16); color: var(--body);
    }
    .search { display: flex; align-items: center; gap: 10px; flex: 1; }
    .search input { flex: 1; font-size: 15px; outline: 0; }
    .search input::placeholder { color: var(--muted); opacity: 1; }
    .tool { position: relative; width: 26px; height: 26px; }
    .badge {
      position: absolute; left: 14px; top: -4px; width: 18px; height: 18px; border-radius: 50%;
      background: #ea5455; color: #fff; font-size: 12px; line-height: 18px; text-align: center;
    }
    .avatar { position: relative; display: grid; place-items: center; width: 38px; height: 38px; margin-left: 2px; border-radius: 50%; background: #ddf6e8; color: var(--green); }
    .avatar::after {
      content: ""; position: absolute; right: 0; bottom: -1px; width: 8px; height: 8px; border-radius: 50%;
      background: var(--green); border: 2px solid #fff;
    }
    main { display: flex; flex-direction: column; min-height: 0; background: #fff; border-radius: 6px; box-shadow: 0 4px 18px rgba(75, 70, 92, 0.1); }
    .head { display: flex; align-items: center; gap: 10px; height: 64px; padding: 10px 24px 0; border-bottom: 1px solid #dbdade; }
    .head select { appearance: none; font-size: 18px; cursor: pointer; }
    .stage { flex: 1; display: flex; gap: 41px; padding: 24px 24px 0 38px; }
    .plan { flex: 1; min-width: 0; padding-top: 62px; }
    .info { display: grid; grid-template-columns: 158px 166px 184px 67px 96px 99px; justify-content: end; align-items: center; height: 73px; margin-top: 27px; padding-right: 8px; }
    .facility { display: flex; align-items: center; gap: 22px; color: #7d8e9e; padding-top: 36px; align-self: start; line-height: 18px; }
    .facility.tight { gap: 14px; }
    .facility b { display: block; font-size: 16px; font-family: "Open Sans", "Noto Sans CJK SC", sans-serif; word-break: keep-all; white-space: pre; line-height: 18px; }
    .facility span { font-family: Roboto, sans-serif; font-size: 12px; }
    .sign { border-radius: 4px; box-shadow: 0 1px 8px rgba(60, 70, 80, 0.2); }
    .big { font: 700 100px/68px "Open Sans", sans-serif; color: #e5eaee; align-self: start; }
    .mid { font: 700 80px/68px "Open Sans", sans-serif; color: #e5eaee; align-self: start; }
    .climate { display: flex; flex-direction: column; gap: 18px; padding-top: 12px; color: #c9d3de; font: 700 22px/24px Roboto, "Noto Sans CJK SC", sans-serif; }
    .climate div { display: flex; align-items: center; justify-content: space-between; }
    .side { display: flex; flex-direction: column; gap: 8px; width: 46px; }
    .zoom { display: grid; place-items: center; width: 46px; height: 46px; border-radius: 8px; background: #e1e0e5; color: #fff; }
    .floors { display: flex; flex-direction: column; align-items: center; margin-top: 4px; padding: 2px 6px; border-radius: 8px; box-shadow: 0 0 8px rgba(75, 70, 92, 0.12); }
    .floor { width: 34px; height: 34px; border-radius: 4px; font-size: 16px; color: #bcbac2; }
    .floor.on { background: var(--green); color: #fff; }
    .step { display: grid; place-items: center; width: 34px; height: 17px; padding-top: 4px; color: #b9b7be; }
    .step.last { padding: 0 0 4px; }
    footer { display: grid; grid-template-columns: 1fr auto 1fr; padding: 0 24px 24px; }
    .devices { grid-column: 2; display: flex; align-items: center; height: 46px; padding: 0 16px 0 17px; border-radius: 6px; box-shadow: 0 0 8px rgba(75, 70, 92, 0.1); }
    .device { display: flex; align-items: center; font-size: 15px; line-height: 20px; color: var(--body); white-space: nowrap; }
    .device + .device::before { content: ""; width: 1px; height: 24px; margin: 0 20px; background: #dbdade; }
    .device svg { color: var(--green); margin-right: 9px; }
    .pill { width: 20px; height: 20px; margin-left: 8px; border-radius: 50%; background: #ddf6e8; color: var(--green); font-size: 12px; line-height: 20px; text-align: center; }
    .stack { display: grid; place-items: center; justify-self: end; width: 46px; height: 46px; border-radius: 8px; box-shadow: 0 0 8px rgba(75, 70, 92, 0.14); }
  `];
  private devices: [string, string, number][] = [
    ["bulb", "照明", 24], ["ac", "空调", 22], ["sense", "人员感应", 20], ["thermo", "温湿度", 1], ["camera", "摄像头", 3], ["hand", "一键告警", 32],
  ];
  private floors = ["F11", "F10", "F9", "F8", "F7", "F6", "F5", "F4", "F3", "F2", "F1", "B1"];
  private facility(art: unknown, zh: string, en: string, tight = false) {
    return html`<div class=${classMap({ facility: true, tight })}>${sign(art)}<div><b>${zh}</b><span>${en}</span></div></div>`;
  }
  render() {
    return html`
      <side-nav></side-nav>
      <div class="content">
        <div class="topbar">
          <label class="search">${line("search", 26, 1.75)}<input type="text" placeholder="Search (Ctrl+/)" aria-label="Search" /></label>
          <button class="tool" aria-label="theme">${line("moon", 26, 1.75)}</button>
          <button class="tool" aria-label="shortcuts">${line("grid", 26, 1.75)}</button>
          <button class="tool" aria-label="notifications">${line("bell", 26, 1.75)}<span class="badge">4</span></button>
          <button class="avatar" aria-label="account">${line("user", 28, 1.5)}</button>
        </div>
        <stat-panel></stat-panel>
        <main>
          <div class="head"><select aria-label="building"><option>A楼12号馆</option></select>${line("chevron", 18, 1.75)}</div>
          <div class="stage">
            <div class="plan"><floor-map></floor-map>
              <div class="info">
                ${this.facility(elevatorSign, "电 梯", "ELEVATOR", true)}
                ${this.facility(stairSign, "楼 梯", "STAIRCASE")}
                ${this.facility(toiletSign, "厕 所", "LAVATORY")}
                <span class="big">2</span><span class="mid">F</span>
                <div class="climate">
                  <div><svg width="20" height="24" viewBox="0 0 20 24" fill="none" stroke="currentColor" stroke-width="1.500"><path d="M10 13.500V4a2 2 0 0 1 4 0v9.500a4.600 4.600 0 1 1-4 0zM1 4h7M3 7h5M1 10h7M5 13h3"></path><path d="M9.600 18a2.400 2.400 0 0 0 4.800 0"></path></svg>22.6℃</div>
                  <div><svg width="21" height="24" viewBox="0 0 21 24" fill="none" stroke="currentColor" stroke-width="1.500"><path d="M8.500 14V4a2 2 0 0 1 4 0v10a4.600 4.600 0 1 1-4 0z"></path><path d="M10.500 8v8"></path><g fill="currentColor" stroke="none"><circle cx="10.500" cy="18" r="2.400"></circle><path d="M18.500 8q3 3.600 2.200 5.200a2.400 2.400 0 0 1-4.400 0Q15.600 11.600 18.500 8zM2 10q2 2.600 1.600 4a1.800 1.800 0 0 1-3.200 0Q0 12.600 2 10zM4.500 2.500q1.600 2 1.300 3a1.400 1.400 0 0 1-2.600 0q-.3-1 1.300-3z"></path></g></svg>43%</div>
                </div>
              </div>
            </div>
            <div class="side">
              <button class="zoom" aria-label="fullscreen">${line("expand", 20, 2)}</button>
              <button class="zoom" aria-label="zoom in">${line("plus", 22, 1.75)}</button>
              <button class="zoom" aria-label="zoom out">${line("minus", 22, 1.75)}</button>
              <div class="floors">
                <button class="step" aria-label="up"><svg width="12" height="6" viewBox="0 0 12 6"><path d="M6 0l6 6H0z" fill="currentColor"></path></svg></button>
                ${this.floors.map((f) => html`<button class=${classMap({ floor: true, on: f === this.floor })} @click=${() => (this.floor = f)}>${f}</button>`)}
                <button class="step last" aria-label="down"><svg width="12" height="6" viewBox="0 0 12 6"><path d="M6 6L0 0h12z" fill="currentColor"></path></svg></button>
              </div>
            </div>
          </div>
          <footer>
            <div class="devices">${this.devices.map(([i, n, c]) => html`<div class="device">${deviceIcon(i, 20)}${n}<span class="pill">${c}</span></div>`)}</div>
            <button class="stack" aria-label="layers"><svg width="30" height="24" viewBox="0 0 30 24"><rect width="30" height="10" rx="1.500" fill="#28c76f"></rect><rect y="14" width="30" height="10" rx="1.500" fill="#28c76f"></rect><path d="M4 5h7M4 19h7" stroke="#fff" stroke-width="1.600"></path></svg></button>
          </footer>
        </main>
      </div>`;
  }
}
